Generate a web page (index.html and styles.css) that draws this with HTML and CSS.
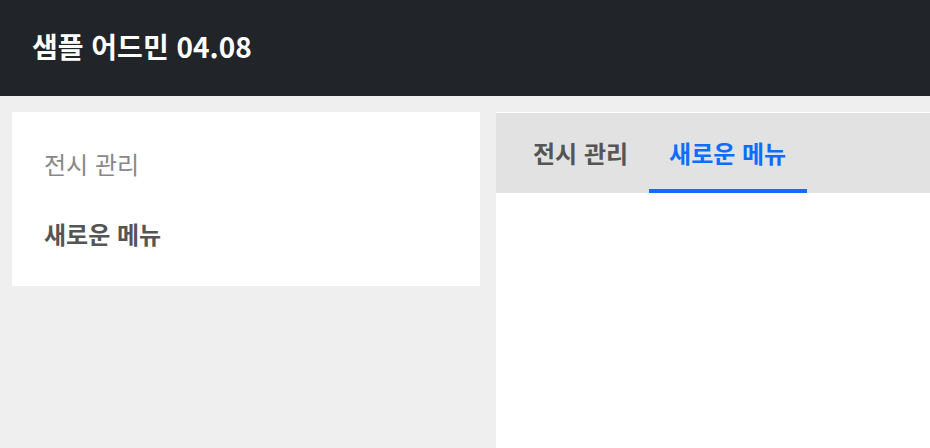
FILE: index.html
```html
<!DOCTYPE html>
<html lang="ko">
<head>
    <meta charset="UTF-8">
    <meta name="viewport" content="width=device-width, initial-scale=1.0">
    <title>샘플 어드민</title>
    <link rel="stylesheet" href="styles.css">
</head>
<body>
    <header class="top-bar">
        <h1 class="brand">샘플 어드민 04.08</h1>
    </header>
    <div class="layout">
        <nav class="side-menu">
            <a class="side-item">전시 관리</a>
            <a class="side-item active">새로운 메뉴</a>
        </nav>
        <section class="content">
            <div class="tabs">
                <a class="tab">전시 관리</a>
                <a class="tab active">새로운 메뉴</a>
            </div>
            <div class="tab-body">
                <!-- 탭 내용 -->
            </div>
        </section>
    </div>
</body>
</html>
```

FILE: styles.css
```css
html, body {
    margin: 0;
    padding: 0;
}
body {
    font-family: "Noto Sans CJK KR", "Noto Sans", sans-serif;
    background-color: #efefef;
    overflow: hidden;
}

.top-bar {
    height: 96px;
    background-color: #212529;
    display: flex;
    align-items: center;
    padding-left: 32px;
}
.brand {
    margin: 0 0 4px;
    color: #fff;
    font-size: 28px;
    font-weight: 700;
}

.layout {
    display: flex;
    gap: 16px;
    padding: 16px 0 0 12px;
    height: calc(100vh - 96px);
    box-sizing: border-box;
}

.side-menu {
    width: 468px;
    flex-shrink: 0;
    align-self: flex-start;
    background-color: #fff;
    padding: 16px 0 18px;
    display: flex;
    flex-direction: column;
}
.side-item {
    height: 70px;
    display: flex;
    align-items: center;
    padding-left: 32px;
    font-size: 24px;
    color: #888;
}
.side-item.active {
    color: #555;
    font-weight: 700;
}

.content {
    flex: 1;
    background-color: #fff;
    display: flex;
    flex-direction: column;
}
.tabs {
    height: 80px;
    margin-top: 1px;
    background-color: #e2e2e2;
    display: flex;
    padding-left: 17px;
    box-sizing: border-box;
}
.tab {
    display: flex;
    align-items: center;
    padding: 2px 21px 0 20px;
    font-size: 24px;
    font-weight: 700;
    color: #555;
    border-bottom: 4px solid transparent;
}
.tab.active {
    color: #0d6efd;
    border-bottom-color: #0d6efd;
}
.tab-body {
    flex: 1;
}
```
